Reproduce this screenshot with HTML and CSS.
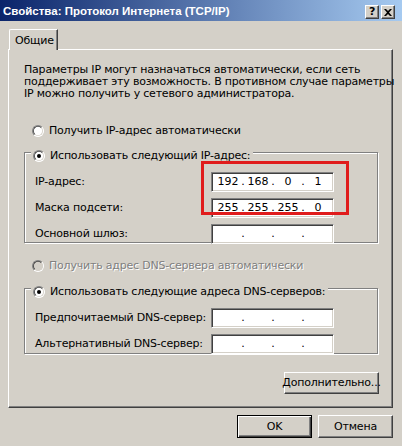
FILE: index.html
```html
<!DOCTYPE html>
<html>
<head>
    <title>Свойства: Протокол Интернета (TCP/IP)</title>
    <link rel="stylesheet" href="styles.css">
</head>
<body>

    <div class="window">
        <div class="titlebar">
            <span class="caption">Свойства: Протокол Интернета (TCP/IP)</span>
            <div class="caption-buttons">
                <div class="cap-btn">?</div>
                <div class="cap-btn close">
                    <svg width="8" height="7" viewBox="0 0 8 7"><path d="M0 0h2l2 2 2-2h2L5 3.5 8 7H6L4 5 2 7H0l3-3.5z" fill="#000"/></svg>
                </div>
            </div>
        </div>

        <div class="client">
            <div class="tabs">
                <div class="tab active">Общие</div>
            </div>

            <div class="panel">
                <p class="intro">Параметры IP могут назначаться автоматически, если сеть<br>поддерживает эту возможность. В противном случае параметры<br>IP можно получить у сетевого администратора.</p>

                <div class="option auto-ip">
                    <span class="radio"></span>
                    <span>Получить IP-адрес автоматически</span>
                </div>

                <div class="group ip-group">
                    <div class="legend">
                        <span class="radio checked"></span>
                        <span>Использовать следующий IP-адрес:</span>
                    </div>
                    <div class="rows">
                        <div class="row">
                            <span>IP-адрес:</span>
                            <div class="ipfield"><span>192</span><i>.</i><span>168</span><i>.</i><span>0</span><i>.</i><span>1</span></div>
                        </div>
                        <div class="row">
                            <span>Маска подсети:</span>
                            <div class="ipfield"><span>255</span><i>.</i><span>255</span><i>.</i><span>255</span><i>.</i><span>0</span></div>
                        </div>
                        <div class="row">
                            <span>Основной шлюз:</span>
                            <div class="ipfield"><span></span><i>.</i><span></span><i>.</i><span></span><i>.</i><span></span></div>
                        </div>
                    </div>
                    <!-- annotation box round the two filled fields -->
                    <div class="highlight"></div>
                </div>

                <div class="option auto-dns disabled">
                    <span class="radio"></span>
                    <span>Получить адрес DNS-сервера автоматически</span>
                </div>

                <div class="group dns-group">
                    <div class="legend">
                        <span class="radio checked"></span>
                        <span>Использовать следующие адреса DNS-серверов:</span>
                    </div>
                    <div class="rows">
                        <div class="row">
                            <span>Предпочитаемый DNS-сервер:</span>
                            <div class="ipfield"><span></span><i>.</i><span></span><i>.</i><span></span><i>.</i><span></span></div>
                        </div>
                        <div class="row">
                            <span>Альтернативный DNS-сервер:</span>
                            <div class="ipfield"><span></span><i>.</i><span></span><i>.</i><span></span><i>.</i><span></span></div>
                        </div>
                    </div>
                </div>

                <div class="advanced">
                    <div class="btn wide">Дополнительно...</div>
                </div>
            </div>

            <div class="dialog-buttons">
                <div class="btn default">OK</div>
                <div class="btn">Отмена</div>
            </div>
        </div>
    </div>

</body>
</html>
```

FILE: styles.css
```css
/* Classic Windows dialog look */
body, html {
    margin: 0;
    height: 100%;
    background: #d4d0c8;
    font: 400 11px/12px "DejaVu Sans", sans-serif;
    letter-spacing: -0.2px;
    color: #000;
    white-space: nowrap;
}

.window {
    width: 402px;
    height: 446px;
    background: #d4d0c8;
    overflow: hidden;
}

/* Title bar */
.titlebar {
    height: 21px;
    display: flex;
    align-items: flex-start;
    justify-content: space-between;
    background: linear-gradient(to right, #0a246a, #a6caf0);
    color: #fff;
}

.caption {
    font: bold 11.5px/13px "Liberation Sans", sans-serif;
    letter-spacing: 0;
    padding: 5px 0 0 3px;
}

.caption-buttons {
    display: flex;
    gap: 2px;
    padding: 5px 7px 0 0;
}

.cap-btn {
    width: 12px;
    height: 12px;
    background: #d4d0c8;
    border: 1px solid;
    border-color: #fff #404040 #404040 #fff;
    box-shadow: inset -1px -1px #808080;
    color: #000;
    font: bold 11px/12px "DejaVu Sans", sans-serif;
    display: flex;
    align-items: center;
    justify-content: center;
}

/* Client area */
.client {
    padding: 8px 9px 0 8px;
}

.tabs {
    display: flex;
    height: 20px;
}

.tab {
    width: 49px;
    height: 21px;
    margin-left: 1px;
    box-sizing: border-box;
    border: 1px solid;
    border-color: #fff #404040 transparent #fff;
    border-bottom: none;
    box-shadow: inset -1px 0 #808080;
    border-top-left-radius: 2px;
    background: #d4d0c8;
    position: relative;
    z-index: 1;
    padding: 5px 0 0 5px;
}

.panel {
    height: 359px;
    box-sizing: border-box;
    border: 1px solid;
    border-color: #fff #404040 #404040 #fff;
    box-shadow: inset -1px -1px #808080;
    padding: 14px 0 0 15px;
}

.intro {
    margin: 0;
}

.option {
    display: flex;
    align-items: center;
    gap: 5px;
    height: 14px;
    padding-left: 8px;
}

.auto-ip {
    margin-top: 24px;
}

.auto-dns {
    margin-top: 16px;
}

.disabled {
    color: #808080;
    text-shadow: 1px 1px #fff;
}

/* Radio buttons */
.radio {
    width: 10px;
    height: 10px;
    border-radius: 50%;
    background: #fff;
    border: 1px solid;
    border-color: #808080 #fff #fff #808080;
    position: relative;
    flex: none;
}

.radio::before {
    content: "";
    position: absolute;
    inset: 0;
    border-radius: 50%;
    border: 1px solid;
    border-color: #404040 #d4d0c8 #d4d0c8 #404040;
    margin: -1px;
    transform: scale(0.83);
}

.disabled .radio {
    background: #d4d0c8;
}

.radio.checked::after {
    content: "";
    position: absolute;
    left: 3px;
    top: 3px;
    width: 4px;
    height: 4px;
    border-radius: 50%;
    background: #000;
}

/* Group boxes */
.group {
    position: relative;
    width: 354px;
    border: 1px solid #808080;
    box-shadow: inset 1px 1px #fff, 1px 1px #fff;
    padding: 0 43px 4px 10px;
    box-sizing: border-box;
}

.ip-group {
    margin-top: 14px;
    height: 91px;
}

.dns-group {
    margin-top: 15px;
    height: 66px;
}

.legend {
    display: inline-flex;
    align-items: center;
    gap: 5px;
    height: 14px;
    margin: -8px 0 0 -4px;
    padding: 0 3px 0 2px;
    background: #d4d0c8;
}

.rows {
    margin-top: 7px;
    display: flex;
    flex-direction: column;
    gap: 6px;
}

.row {
    display: flex;
    align-items: center;
    justify-content: space-between;
    height: 20px;
}

.ipfield {
    width: 123px;
    height: 20px;
    box-sizing: border-box;
    background: #fff;
    border: 1px solid;
    border-color: #808080 #fff #fff #808080;
    box-shadow: inset 1px 1px #404040, inset -1px -1px #d4d0c8;
    display: flex;
    align-items: center;
    padding-left: 3px;
    letter-spacing: 0;
}

.ipfield span {
    width: 26px;
    text-align: center;
}

.ipfield i {
    font-style: normal;
    width: 4px;
    text-align: center;
}

.highlight {
    position: absolute;
    left: 176px;
    top: 8px;
    width: 142px;
    height: 48px;
    border: 3px solid #e01c1c;
}

/* Buttons */
.btn {
    width: 75px;
    height: 23px;
    box-sizing: border-box;
    border: 1px solid;
    border-color: #fff #404040 #404040 #fff;
    box-shadow: inset -1px -1px #808080;
    display: flex;
    align-items: center;
    justify-content: center;
    background: #d4d0c8;
}

.btn.wide {
    width: 95px;
    height: 22px;
}

.btn.default {
    border: 1px solid #000;
    box-shadow: inset 1px 1px #fff, inset -1px -1px #404040, inset -2px -2px #808080;
}

.advanced {
    display: flex;
    justify-content: flex-end;
    width: 355px;
    margin-top: 18px;
}

.dialog-buttons {
    display: flex;
    justify-content: flex-end;
    gap: 6px;
    margin-top: 7px;
}
```
